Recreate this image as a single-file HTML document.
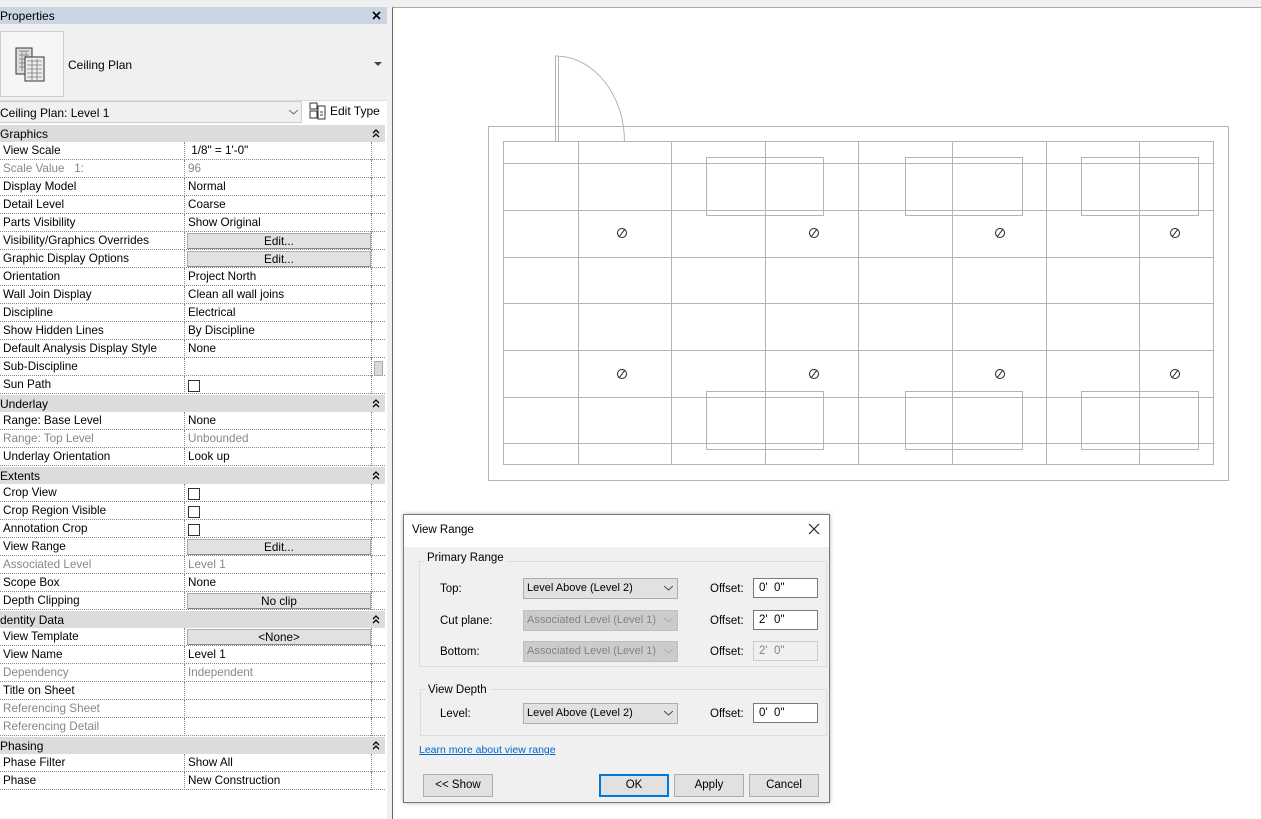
<!DOCTYPE html>
<html><head><meta charset="utf-8"><style>
*{margin:0;padding:0;box-sizing:border-box}
body{width:1261px;height:819px;overflow:hidden;background:#f0f0f0;font-family:"Liberation Sans",sans-serif;font-size:12px;color:#000;position:relative}
.a{position:absolute}
#panel{left:0;top:7px;width:387px;height:812px;background:#fff}
.r{position:absolute;left:0;width:385px;height:18px;border-bottom:1px dotted #888}
.r .l{position:absolute;left:3px;top:2px;white-space:nowrap;font-size:11.7px}
.r .v{position:absolute;left:184px;top:0;width:188px;height:18px;border-left:1px dotted #888;border-right:1px dotted #888;padding:2px 0 0 3px;white-space:nowrap;font-size:11.7px}
.g{color:#888}
.h{position:absolute;left:0;width:385px;height:17px;background:#dcdcdc;padding:2px 0 0 0}
.h svg{position:absolute;left:372px;top:4px}
.btn{position:absolute;left:2px;top:1px;width:184px;height:16px;background:#e1e1e1;border:1px solid #adadad;border-bottom-color:#888;text-align:center;padding-top:1px}
.cb{display:inline-block;width:12px;height:12px;border:1px solid #333;margin-top:2px;background:#fff}
#dlg{left:403px;top:514px;width:427px;height:289px;border:1px solid #777;background:#f0f0f0;box-shadow:0 0 4px rgba(0,0,0,.3);font-size:11.5px}
.sel{position:absolute;width:155px;height:21px;border:1px solid #adadad;background:#e1e1e1;padding:3px 0 0 3px;white-space:nowrap;overflow:hidden;font-size:11px}
.sel.d{background:#ccc;border-color:#bfbfbf;color:#838383}
.sel svg{position:absolute;right:4px;top:7px}
.inp{position:absolute;width:65px;height:20px;border:1px solid #7a7a7a;background:#fff;padding:3px 0 0 5px}
.inp.d{border-color:#ccc;background:#f0f0f0;color:#838383}
.db{position:absolute;height:23px;border:1px solid #adadad;background:#e1e1e1;text-align:center;padding-top:4px}
.gb{position:absolute;border:1px solid #dcdcdc}
.gt{position:absolute;background:#f0f0f0;padding:0 3px}
</style></head><body>
<div id="panel" class="a">
 <div class="a" style="left:0;top:0;width:387px;height:17px;background:#c9d5e2;padding:2px 0 0 0">Properties<svg class="a" style="left:372px;top:4px" width="9" height="9"><path d="M1 1l7 7M8 1L1 8" stroke="#000" stroke-width="1.6"/></svg></div>
 <div class="a" style="left:0;top:17px;width:387px;height:77px;background:#f0f0f0;border-bottom:1px solid #ddd"></div>
 <div class="a" style="left:0;top:24px;width:64px;height:66px;background:#f6f6f6;border:1px solid #ccc"></div>
 <svg class="a" style="left:15px;top:40px" width="32" height="36" viewBox="0 0 32 36"><rect x="1" y="1" width="16" height="26" fill="#ddd" stroke="#333"/><path d="M4 4h10M4 8h10M4 12h10M4 16h10M4 20h10M7 4v20M11 4v20" stroke="#777" stroke-width="0.8"/><rect x="10" y="10" width="19" height="24" fill="#eee" stroke="#333"/><path d="M12 14h15M12 18h15M12 22h15M12 26h15M12 30h15M17 12v21M22 12v21" stroke="#777" stroke-width="0.8"/></svg>
 <div class="a" style="left:68px;top:51px">Ceiling Plan</div>
 <svg class="a" style="left:374px;top:55px" width="8" height="5"><path d="M0 0h8l-4 4z" fill="#444"/></svg>
 <div class="a" style="left:0;top:94px;width:302px;height:22px;background:#f0f0f0;border:1px solid #ccc;border-left:none;padding:4px 0 0 0">Ceiling Plan: Level 1<svg class="a" style="left:289px;top:8px" width="9" height="5"><path d="M0 0l4.5 4 4.5-4" fill="none" stroke="#666"/></svg></div>
 <svg class="a" style="left:309px;top:95px" width="17" height="18"><rect x="1" y="1" width="7" height="6" fill="none" stroke="#333"/><rect x="1" y="9" width="7" height="7" fill="none" stroke="#333"/><rect x="9" y="4" width="7" height="13" fill="none" stroke="#333"/><path d="M11 10h3M11 13h3" stroke="#333"/></svg>
 <div class="a" style="left:330px;top:97px">Edit Type</div>
 <div class="h" style="top:118px">Graphics<svg width="8" height="9"><path d="M1 4l3-3 3 3M1 8l3-3 3 3" fill="none" stroke="#000" stroke-width="1.3"/></svg></div>
 <div class="r" style="top:135px"><span class="l">View Scale</span><span class="v">&nbsp;1/8" = 1'-0"</span></div>
 <div class="r" style="top:153px"><span class="l g">Scale Value &nbsp;&nbsp;1:</span><span class="v g">96</span></div>
 <div class="r" style="top:171px"><span class="l">Display Model</span><span class="v">Normal</span></div>
 <div class="r" style="top:189px"><span class="l">Detail Level</span><span class="v">Coarse</span></div>
 <div class="r" style="top:207px"><span class="l">Parts Visibility</span><span class="v">Show Original</span></div>
 <div class="r" style="top:225px"><span class="l">Visibility/Graphics Overrides</span><span class="v"><span class="btn">Edit...</span></span></div>
 <div class="r" style="top:243px"><span class="l">Graphic Display Options</span><span class="v"><span class="btn">Edit...</span></span></div>
 <div class="r" style="top:261px"><span class="l">Orientation</span><span class="v">Project North</span></div>
 <div class="r" style="top:279px"><span class="l">Wall Join Display</span><span class="v">Clean all wall joins</span></div>
 <div class="r" style="top:297px"><span class="l">Discipline</span><span class="v">Electrical</span></div>
 <div class="r" style="top:315px"><span class="l">Show Hidden Lines</span><span class="v">By Discipline</span></div>
 <div class="r" style="top:333px"><span class="l">Default Analysis Display Style</span><span class="v">None</span></div>
 <div class="r" style="top:351px"><span class="l">Sub-Discipline</span><span class="v"></span></div>
 <div class="a" style="left:374px;top:354px;width:9px;height:15px;background:#dadada;border:1px solid #aaa"></div>
 <div class="r" style="top:369px"><span class="l">Sun Path</span><span class="v"><span class="cb"></span></span></div>
 <div class="h" style="top:388px">Underlay<svg width="8" height="9"><path d="M1 4l3-3 3 3M1 8l3-3 3 3" fill="none" stroke="#000" stroke-width="1.3"/></svg></div>
 <div class="r" style="top:405px"><span class="l">Range: Base Level</span><span class="v">None</span></div>
 <div class="r" style="top:423px"><span class="l g">Range: Top Level</span><span class="v g">Unbounded</span></div>
 <div class="r" style="top:441px"><span class="l">Underlay Orientation</span><span class="v">Look up</span></div>
 <div class="h" style="top:460px">Extents<svg width="8" height="9"><path d="M1 4l3-3 3 3M1 8l3-3 3 3" fill="none" stroke="#000" stroke-width="1.3"/></svg></div>
 <div class="r" style="top:477px"><span class="l">Crop View</span><span class="v"><span class="cb"></span></span></div>
 <div class="r" style="top:495px"><span class="l">Crop Region Visible</span><span class="v"><span class="cb"></span></span></div>
 <div class="r" style="top:513px"><span class="l">Annotation Crop</span><span class="v"><span class="cb"></span></span></div>
 <div class="r" style="top:531px"><span class="l">View Range</span><span class="v"><span class="btn">Edit...</span></span></div>
 <div class="r" style="top:549px"><span class="l g">Associated Level</span><span class="v g">Level 1</span></div>
 <div class="r" style="top:567px"><span class="l">Scope Box</span><span class="v">None</span></div>
 <div class="r" style="top:585px"><span class="l">Depth Clipping</span><span class="v"><span class="btn">No clip</span></span></div>
 <div class="h" style="top:604px">dentity Data<svg width="8" height="9"><path d="M1 4l3-3 3 3M1 8l3-3 3 3" fill="none" stroke="#000" stroke-width="1.3"/></svg></div>
 <div class="r" style="top:621px"><span class="l">View Template</span><span class="v"><span class="btn">&lt;None&gt;</span></span></div>
 <div class="r" style="top:639px"><span class="l">View Name</span><span class="v">Level 1</span></div>
 <div class="r" style="top:657px"><span class="l g">Dependency</span><span class="v g">Independent</span></div>
 <div class="r" style="top:675px"><span class="l">Title on Sheet</span><span class="v"></span></div>
 <div class="r" style="top:693px"><span class="l g">Referencing Sheet</span><span class="v"></span></div>
 <div class="r" style="top:711px"><span class="l g">Referencing Detail</span><span class="v"></span></div>
 <div class="h" style="top:730px">Phasing<svg width="8" height="9"><path d="M1 4l3-3 3 3M1 8l3-3 3 3" fill="none" stroke="#000" stroke-width="1.3"/></svg></div>
 <div class="r" style="top:747px"><span class="l">Phase Filter</span><span class="v">Show All</span></div>
 <div class="r" style="top:765px"><span class="l">Phase</span><span class="v">New Construction</span></div>
</div>
<div class="a" style="left:392px;top:7px;width:869px;height:812px;background:#fff;border-left:1px solid #666;border-top:1px solid #aaa"></div>
<svg class="a" style="left:0;top:0" width="1261" height="819" fill="none" stroke="#b4b4b4" stroke-width="1">
 <rect x="488.5" y="126.5" width="740" height="354"/>
 <rect x="503.5" y="141.5" width="710" height="323"/>
 <path d="M578.5 141v324M671.5 141v324M765.5 141v324M858.5 141v324M952.5 141v324M1046.5 141v324M1139.5 141v324"/>
 <path d="M503 163.5h711M503 210.5h711M503 257.5h711M503 303.5h711M503 350.5h711M503 397.5h711M503 443.5h711"/>
 <rect x="706.5" y="157.5" width="117" height="58"/><rect x="905.5" y="157.5" width="117" height="58"/><rect x="1081.5" y="157.5" width="117" height="58"/>
 <rect x="706.5" y="391.5" width="117" height="58"/><rect x="905.5" y="391.5" width="117" height="58"/><rect x="1081.5" y="391.5" width="117" height="58"/>
 <path d="M555.5 141V56h3M558.5 56v85M558 56C595 58 624 95 624.5 141"/>
 <g stroke="#222"><circle cx="622" cy="233" r="4.5"/><path d="M619 237l6-8"/><circle cx="814" cy="233" r="4.5"/><path d="M811 237l6-8"/><circle cx="1000" cy="233" r="4.5"/><path d="M997 237l6-8"/><circle cx="1175" cy="233" r="4.5"/><path d="M1172 237l6-8"/>
 <circle cx="622" cy="374" r="4.5"/><path d="M619 378l6-8"/><circle cx="814" cy="374" r="4.5"/><path d="M811 378l6-8"/><circle cx="1000" cy="374" r="4.5"/><path d="M997 378l6-8"/><circle cx="1175" cy="374" r="4.5"/><path d="M1172 378l6-8"/></g>
</svg>
<div id="dlg" class="a">
 <div class="a" style="left:0;top:0;width:425px;height:32px;background:#fff;padding:9px 0 0 8px">View Range</div>
 <svg class="a" style="left:404px;top:8px" width="12" height="12"><path d="M1 1l10 10M11 1L1 11" stroke="#222" stroke-width="1.2"/></svg>
 <div class="gb" style="left:15px;top:46px;width:408px;height:106px"></div>
 <div class="gt" style="left:20px;top:37px">Primary Range</div>
 <div class="a" style="left:36px;top:68px">Top:</div>
 <div class="sel" style="left:119px;top:63px">Level Above (Level 2)<svg width="9" height="5"><path d="M0 0l4.5 4 4.5-4" fill="none" stroke="#444"/></svg></div>
 <div class="a" style="left:306px;top:68px">Offset:</div>
 <div class="inp" style="left:349px;top:63px">0' &nbsp;0"</div>
 <div class="a" style="left:36px;top:100px">Cut plane:</div>
 <div class="sel d" style="left:119px;top:95px">Associated Level (Level 1)<svg width="9" height="5"><path d="M0 0l4.5 4 4.5-4" fill="none" stroke="#aaa"/></svg></div>
 <div class="a" style="left:306px;top:100px">Offset:</div>
 <div class="inp" style="left:349px;top:95px">2' &nbsp;0"</div>
 <div class="a" style="left:36px;top:131px">Bottom:</div>
 <div class="sel d" style="left:119px;top:126px">Associated Level (Level 1)<svg width="9" height="5"><path d="M0 0l4.5 4 4.5-4" fill="none" stroke="#aaa"/></svg></div>
 <div class="a" style="left:306px;top:131px">Offset:</div>
 <div class="inp d" style="left:349px;top:126px">2' &nbsp;0"</div>
 <div class="gb" style="left:16px;top:174px;width:407px;height:47px"></div>
 <div class="gt" style="left:21px;top:169px">View Depth</div>
 <div class="a" style="left:36px;top:193px">Level:</div>
 <div class="sel" style="left:119px;top:188px">Level Above (Level 2)<svg width="9" height="5"><path d="M0 0l4.5 4 4.5-4" fill="none" stroke="#444"/></svg></div>
 <div class="a" style="left:306px;top:193px">Offset:</div>
 <div class="inp" style="left:349px;top:188px">0' &nbsp;0"</div>
 <div class="a" style="left:15px;top:229px;color:#0066cc;text-decoration:underline;font-size:10.5px">Learn more about view range</div>
 <div class="db" style="left:19px;top:259px;width:70px">&lt;&lt; Show</div>
 <div class="db" style="left:195px;top:259px;width:70px;border:2px solid #0078d7;padding-top:3px">OK</div>
 <div class="db" style="left:270px;top:259px;width:70px">Apply</div>
 <div class="db" style="left:345px;top:259px;width:70px">Cancel</div>
</div>
</body></html>
